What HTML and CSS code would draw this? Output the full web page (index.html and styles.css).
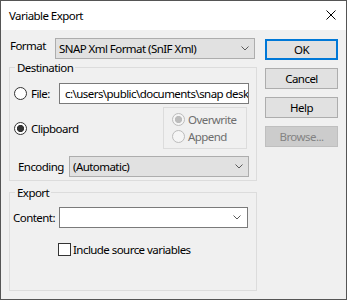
FILE: index.html
```html
<!DOCTYPE html>
<html lang="en">
<head>
  <meta charset="UTF-8" />
  <meta name="viewport" content="width=device-width, initial-scale=1.0" />
  <title>Variable Export</title>
  <link rel="stylesheet" href="styles.css">
</head>
<body>
  <div class="window">
    <div class="titlebar">
      <span class="title">Variable Export</span>
      <svg class="close" width="10" height="10" viewBox="0 0 10 10">
        <path d="M0.5 0.5 L9.5 9.5 M9.5 0.5 L0.5 9.5" stroke="#000" stroke-width="1" fill="none" />
      </svg>
    </div>

    <div class="dialog">
      <div class="main">
        <div class="format-row">
          <label class="format-label">Format</label>
          <div class="combo list">
            <span class="combo-text">SNAP Xml Format (SnIF Xml)</span>
            <svg class="arrow" width="8" height="5" viewBox="0 0 8 5"><polyline points="0.5,0.5 4,4 7.5,0.5" /></svg>
          </div>
        </div>

        <fieldset class="group dest">
          <legend>Destination</legend>
          <div class="file-row">
            <label class="opt file-opt"><span class="radio"></span>File:</label>
            <input class="path" type="text" value="c:\users\public\documents\snap desktop" />
          </div>
          <div class="clip-row">
            <label class="opt"><span class="radio checked"></span>Clipboard</label>
            <div class="mode-box">
              <div class="opt disabled"><span class="radio checked"></span>Overwrite</div>
              <div class="opt disabled"><span class="radio"></span>Append</div>
            </div>
          </div>
          <div class="enc-row">
            <label class="enc-label">Encoding</label>
            <div class="combo list">
              <span class="combo-text">(Automatic)</span>
              <svg class="arrow" width="8" height="5" viewBox="0 0 8 5"><polyline points="0.5,0.5 4,4 7.5,0.5" /></svg>
            </div>
          </div>
        </fieldset>

        <fieldset class="group export">
          <legend>Export</legend>
          <div class="content-row">
            <label class="content-label">Content:</label>
            <div class="combo edit">
              <span class="combo-text"></span>
              <svg class="arrow" width="8" height="5" viewBox="0 0 8 5"><polyline points="0.5,0.5 4,4 7.5,0.5" /></svg>
            </div>
          </div>
          <label class="check-row"><span class="checkbox"></span>Include source variables</label>
        </fieldset>
      </div>

      <div class="buttons">
        <button class="btn default">OK</button>
        <button class="btn">Cancel</button>
        <button class="btn">Help</button>
        <button class="btn" disabled>Browse...</button>
      </div>
    </div>
  </div>
</body>
</html>
```

FILE: styles.css
```css
* {
  box-sizing: border-box;
}
body {
  margin: 0;
  font-family: "Noto Sans", "Open Sans", sans-serif;
  font-size: 11.5px;
  letter-spacing: -0.55px;
  line-height: 15px;
  color: #000;
}
.window {
  width: 347px;
  height: 300px;
  border: 1px solid #555;
  display: flex;
  flex-direction: column;
  background: #f0f0f0;
}
.titlebar {
  height: 29px;
  flex: none;
  background: #fff;
  display: flex;
  align-items: center;
  justify-content: space-between;
  padding: 0 10px 1px 8px;
}
.dialog {
  flex: 1;
  display: flex;
  gap: 8px;
  padding: 8px;
}
.main {
  width: 248px;
  display: flex;
  flex-direction: column;
}

/* combo boxes */
.combo {
  height: 21px;
  flex: 1;
  display: flex;
  align-items: center;
  justify-content: space-between;
  padding: 0 5px 0 3px;
  white-space: nowrap;
  overflow: hidden;
}
.combo.list {
  background: #e1e1e1;
  border: 1px solid #adadad;
}
.combo.edit {
  background: #fff;
  border: 1px solid #7a7a7a;
  margin-right: 1px;
  padding-right: 6px;
}
.arrow {
  flex: none;
}
.arrow polyline {
  fill: none;
  stroke: #5a5a5a;
  stroke-width: 1;
}

.format-row {
  display: flex;
  align-items: flex-start;
  margin-right: 2px;
}
.format-label {
  width: 46px;
  padding-left: 1px;
}

/* group boxes */
.group {
  margin: 0;
  min-width: 0;
  border: 1px solid #dcdcdc;
  padding: 8px 7px 3px 2px;
}
.group legend {
  padding: 0 2px;
  margin-left: 3px;
  line-height: 15px;
}
.dest {
  margin-top: 1px;
}
.export {
  flex: 1;
  margin-top: 4px;
  padding-top: 7px;
}

.opt {
  display: flex;
  align-items: center;
  gap: 4px;
  white-space: nowrap;
}
.radio {
  flex: none;
  width: 13px;
  height: 13px;
  border: 1px solid #333;
  border-radius: 50%;
  background: #fff;
}
.radio.checked {
  background: radial-gradient(circle, #333 0 3.3px, #fff 3.9px);
}
.disabled {
  color: #6d6d6d;
  gap: 3px;
}
.disabled .radio {
  border-color: #bcbcbc;
  background: #f5f5f5;
}
.disabled .radio.checked {
  background: radial-gradient(circle, #bcbcbc 0 3.3px, #f5f5f5 3.9px);
}

.file-row {
  display: flex;
  align-items: center;
  margin-left: 2px;
}
.file-opt {
  width: 45px;
}
.path {
  flex: 1;
  min-width: 0;
  height: 21px;
  margin: 0;
  border: 1px solid #7a7a7a;
  background: #fff;
  padding: 0 0 0 5px;
  font: inherit;
  letter-spacing: inherit;
  color: #000;
  outline: none;
}

.clip-row {
  display: flex;
  align-items: center;
  justify-content: space-between;
  margin: 3px 2px 0 2px;
}
.mode-box {
  width: 84px;
  border: 1px solid #dcdcdc;
  padding: 3px 0 3px 8px;
}
.mode-box .opt {
  height: 17px;
}

.enc-row {
  display: flex;
  align-items: center;
  margin-top: 7px;
}
.enc-label {
  width: 57px;
  padding-left: 6px;
}

.content-row {
  display: flex;
  align-items: center;
}
.content-label {
  width: 47px;
  padding-left: 1px;
}
.check-row {
  display: flex;
  align-items: center;
  gap: 2px;
  margin: 14px 0 0 46px;
}
.checkbox {
  flex: none;
  width: 13px;
  height: 13px;
  border: 1px solid #333;
  background: #fff;
}

/* buttons */
.buttons {
  width: 73px;
  display: flex;
  flex-direction: column;
  gap: 8px;
  margin-top: 1px;
}
.btn {
  height: 21px;
  margin: 0;
  padding: 0;
  background: #e1e1e1;
  border: 1px solid #adadad;
  font: inherit;
  letter-spacing: inherit;
  color: #000;
}
.btn.default {
  border: 2px solid #0078d7;
}
.btn:disabled {
  background: #cccccc;
  border-color: #bfbfbf;
  color: #838383;
}
```
